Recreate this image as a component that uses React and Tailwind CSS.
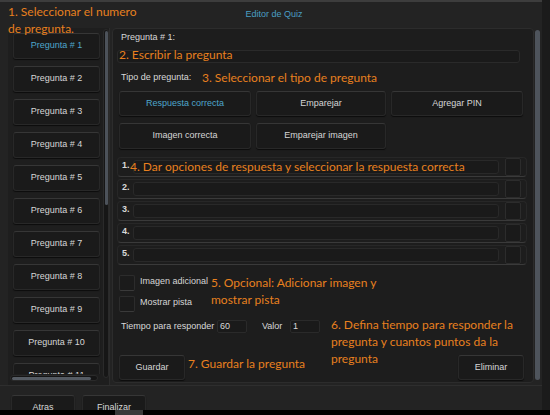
import React from 'react';

const ui = { fontFamily: '"Liberation Sans", Arial, sans-serif' };
const note = { fontFamily: 'Lato, "Open Sans", sans-serif' };

function Btn({ children, className = '', active }) {
  return (
    <div
      className={
        'flex items-center justify-center rounded-[3px] bg-[#1a1a1a] border border-[#282828] border-t-[#363636] shadow-[0_1px_1px_rgba(0,0,0,0.6)] text-[9px] ' +
        (active ? 'text-[#4ea6cc] ' : 'text-[#d6d6d6] ') +
        className
      }
      style={ui}
    >
      {children}
    </div>
  );
}

function Note({ children, className = '' }) {
  return (
    <div className={'text-[12px] leading-[17px] text-[#e8801f] whitespace-nowrap ' + className} style={note}>
      {children}
    </div>
  );
}

function OptionRow({ n, children }) {
  return (
    <div className="ml-[4px] w-[410px] h-[20px] flex items-center rounded-[4px] bg-[#1d1d1d] border border-[#272727] border-b-[#3a3a3a]">
      <div className="w-[15px] pl-[4px] text-[9px] font-bold text-[#d8d8d8] -mt-[3px]" style={ui}>
        {n}.
      </div>
      <div className="relative w-[366px] h-[14px] rounded-[3px] bg-[#1a1a1a] border border-[#292929]">
        {children}
      </div>
      <div className="ml-[6px] w-[16px] h-[18px] rounded-[2px] bg-[#1a1a1a] border border-[#2c2c2c]" />
    </div>
  );
}

function Check({ label }) {
  return (
    <div className="flex items-center gap-[5px]">
      <div className="w-[16px] h-[16px] rounded-[2px] bg-[#1b1b1b] border border-[#2c2c2c] border-b-[#3a3a3a]" />
      <span className="text-[9px] text-[#d6d6d6] -mt-[3px]" style={ui}>{label}</span>
    </div>
  );
}

export default function App() {
  const preguntas = [1, 2, 3, 4, 5, 6, 7, 8, 9, 10, 11];

  return (
    <div className="relative w-[550px] h-[415px] bg-[#1b1b1b] overflow-hidden">
      <div className="w-[542px] h-[410px] bg-[#232323] border-t-2 border-[#3d3d3d] flex flex-col">
        {/* header */}
        <div className="h-[26px] flex items-center justify-center pl-[6px] text-[9px] text-[#4a9ec4]" style={ui}>
          Editor de Quiz
        </div>

        {/* body */}
        <div className="h-[357px] flex">
          {/* lista de preguntas */}
          <div className="ml-[8px] w-[102px] h-full flex flex-col bg-[#1e1e1e] border-r border-[#2c2c2c]">
            <div className="flex h-[346px]">
              <div className="w-[95px] h-full overflow-hidden pt-[5px] pl-[5px] flex flex-col gap-[7px]">
                {preguntas.map(function (p) {
                  return (
                    <Btn key={p} active={p === 1} className="w-[87px] h-[26px] shrink-0">
                      Pregunta # {p}
                    </Btn>
                  );
                })}
              </div>
              <div className="ml-[1px] w-[6px] h-[349px] mt-[1px] rounded-full bg-[#161616] border border-[#2a2a2a] p-[0.5px]">
                <div className="w-full h-[174px] rounded-full bg-[#4c525a]" />
              </div>
            </div>
            <div className="mt-[1px] ml-[2px] w-[88px] h-[6px] rounded-full bg-[#151515] border border-[#2a2a2a] p-[0.5px]">
              <div className="w-[79px] h-full rounded-full bg-[#555b63]" />
            </div>
          </div>

          {/* editor */}
          <div className="ml-[2px] flex flex-1">
            <div className="w-[422px] h-[355px] rounded-[4px] bg-[#1d1d1d] border border-[#2c2c2c] flex flex-col">
              <div className="ml-[8px] mt-[3px] h-[10px] leading-[10px] text-[9px] text-[#d8d8d8]" style={ui}>
                Pregunta # 1:
              </div>
              <div className="relative ml-[4px] mt-[8px] w-[403px] h-[13px] rounded-[3px] bg-[#1a1a1a] border border-[#2a2a2a]">
                <Note className="absolute left-[1px] -top-[5px]">2. Escribir la pregunta</Note>
              </div>
              <div className="mt-[6px] h-[17px] flex items-center">
                <div className="ml-[8px] w-[81px] text-[9px] text-[#d8d8d8]" style={ui}>Tipo de pregunta:</div>
                <Note>3. Seleccionar el tipo de pregunta</Note>
              </div>
              <div className="ml-[6px] mt-[5px] flex gap-[5px]">
                <Btn active className="w-[132px] h-[25px]">Respuesta correcta</Btn>
                <Btn className="w-[130px] h-[25px]">Emparejar</Btn>
                <Btn className="w-[132px] h-[25px]">Agregar PIN</Btn>
              </div>
              <div className="ml-[6px] mt-[7px] flex gap-[5px]">
                <Btn className="w-[132px] h-[26px]">Imagen correcta</Btn>
                <Btn className="w-[130px] h-[26px]">Emparejar imagen</Btn>
              </div>
              <div className="mt-[8px] flex flex-col gap-[2px]">
                <OptionRow n={1}>
                  <Note className="absolute -left-[4px] -top-[3px]">
                    4. Dar opciones de respuesta y seleccionar la respuesta correcta
                  </Note>
                </OptionRow>
                <OptionRow n={2} />
                <OptionRow n={3} />
                <OptionRow n={4} />
                <OptionRow n={5} />
              </div>
              <div className="mt-[10px] ml-[6px] flex">
                <div className="w-[92px] flex flex-col gap-[5px]">
                  <Check label="Imagen adicional" />
                  <Check label="Mostrar pista" />
                </div>
                <Note className="-mt-[1px] leading-[16px]">
                  5. Opcional: Adicionar imagen y
                  <br />
                  mostrar pista
                </Note>
              </div>
              <div className="relative mt-[8px] h-[13px] flex items-center text-[9px] text-[#d8d8d8]" style={ui}>
                <span className="ml-[8px] w-[96px]">Tiempo para responder</span>
                <div className="w-[30px] h-[13px] pl-[2px] rounded-[2px] bg-[#1a1a1a] border border-[#2a2a2a] leading-[11px]">60</div>
                <span className="ml-[15px] w-[28px]">Valor</span>
                <div className="w-[30px] h-[13px] pl-[2px] rounded-[2px] bg-[#1a1a1a] border border-[#2a2a2a] leading-[11px]">1</div>
                <Note className="absolute left-[218px] -top-[4px] leading-[16.5px]">
                  6. Defina tiempo para responder la
                  <br />
                  pregunta y cuantos puntos da la
                  <br />
                  pregunta
                </Note>
              </div>
              <div className="mt-[22px] ml-[6px] mr-[9px] flex items-start">
                <Btn className="w-[66px] h-[25px]">Guardar</Btn>
                <Note className="ml-[3px]">7. Guardar la pregunta</Note>
                <Btn className="ml-auto w-[66px] h-[25px]">Eliminar</Btn>
              </div>
            </div>
            <div className="ml-[1px] mt-[2px] w-[5px] h-[350px] rounded-full bg-[#4e545c]" />
          </div>
        </div>

        {/* footer */}
        <div className="flex-1 overflow-hidden border-t border-[#2e2e2e] pt-[9px] pl-[11px] flex gap-[7px]">
          <Btn className="w-[64px] h-[24px] items-start pt-[5px]">Atras</Btn>
          <Btn className="w-[64px] h-[24px] items-start pt-[5px]">Finalizar</Btn>
        </div>
      </div>
      <div className="h-[5px] bg-black flex">
        <div className="ml-[115px] w-[28px] h-full bg-[#3a3a3a]" />
      </div>

      <Note className="absolute left-[8px] top-[3px]">
        1. Seleccionar el numero
        <br />
        de pregunta.
      </Note>
    </div>
  );
}
